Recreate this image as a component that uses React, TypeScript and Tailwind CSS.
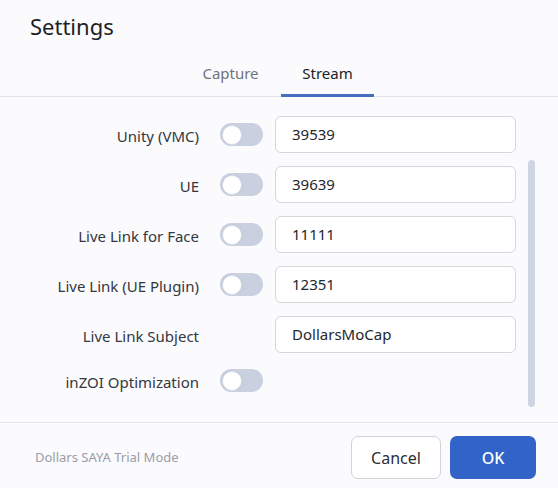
import React from "react";

type Row = { label: string; toggle: boolean; value?: string };

const rows: Row[] = [
  { label: "Unity (VMC)", toggle: true, value: "39539" },
  { label: "UE", toggle: true, value: "39639" },
  { label: "Live Link for Face", toggle: true, value: "11111" },
  { label: "Live Link (UE Plugin)", toggle: true, value: "12351" },
  { label: "Live Link Subject", toggle: false, value: "DollarsMoCap" },
  { label: "inZOI Optimization", toggle: true },
];

function Toggle() {
  return (
    <div className="w-[43px] h-[23px] rounded-full bg-[#c9d0e0] flex items-center px-[2px]">
      <div className="w-[20px] h-[20px] rounded-full bg-white border border-[#dde1ea] shadow-[0_0_1px_rgba(0,0,0,0.15)]" />
    </div>
  );
}

export default function App() {
  return (
    <div className="w-[558px] h-[488px] bg-[#fbfafd] flex flex-col font-['Noto_Sans',sans-serif] text-[#2b2f36] overflow-hidden">
      {/* header */}
      <div className="h-[52px] pl-[30px] pt-[11px] text-[22px] leading-[30px] text-[#1c1f24]">
        Settings
      </div>

      {/* tabs */}
      <div className="h-[45px] flex justify-center gap-[4px] border-b border-[#e2e2e8]">
        <div className="w-[93px] flex items-center justify-center text-[15px] text-[#6f747c] pb-[2px]">
          Capture
        </div>
        <div className="w-[93px] flex items-center justify-center text-[15px] text-[#202328] border-b-[3px] border-[#4a6cc0] mb-[-1px] pt-[1px]">
          Stream
        </div>
      </div>

      {/* content */}
      <div className="h-[325px] flex">
        <div className="flex flex-col gap-[13px] pt-[19px]">
          {rows.map((r) => (
            <div
              key={r.label}
              className={`grid grid-cols-[208px_43px_241px] gap-x-[12px] items-center ${
                r.value ? "h-[37px]" : "h-[29px]"
              }`}
            >
              <div className="text-right text-[15px] text-[#33383f] pr-[9px] pt-[3px] leading-none">
                {r.label}
              </div>
              <div className="flex items-center">{r.toggle ? <Toggle /> : null}</div>
              {r.value ? (
                <div className="h-[37px] rounded-[6px] border border-[#d6d6dc] bg-white flex items-center pl-[16px] text-[15px] text-[#24272c]">
                  {r.value}
                </div>
              ) : (
                <div />
              )}
            </div>
          ))}
        </div>
        {/* scrollbar */}
        <div className="ml-[12px] w-[7px]">
          <div className="mt-[63px] h-[247px] w-[7px] rounded-full bg-[#cdd4e2]" />
        </div>
      </div>

      {/* footer */}
      <div className="flex-1 border-t border-[#e6e6ec] flex items-start pt-[13px] pl-[35px] pr-[22px]">
        <div className="flex-1 h-[43px] flex items-center text-[13px] text-[#9a9ea6]">
          Dollars SAYA Trial Mode
        </div>
        <div className="flex gap-[9px]">
          <button className="w-[90px] h-[43px] rounded-[7px] border border-[#d2d2d8] bg-white text-[16px] text-[#2b2f36]">
            Cancel
          </button>
          <button className="w-[86px] h-[43px] rounded-[7px] bg-[#3163c9] text-[16px] font-medium text-white">
            OK
          </button>
        </div>
      </div>
    </div>
  );
}
